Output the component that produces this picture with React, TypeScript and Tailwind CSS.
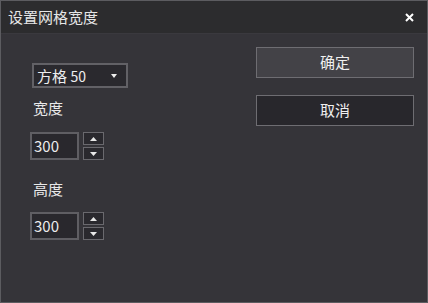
import React from 'react'

const font = { fontFamily: '"Noto Sans CJK SC", "Noto Sans", sans-serif' }

function Spin() {
  return (
    <div className="ml-[4px] flex h-[28px] w-[21px] flex-col justify-between">
      <div className="flex h-[13px] items-center justify-center border border-[#6a696e] bg-[#2a292e]">
        <svg width="7" height="4" viewBox="0 0 7 4"><path d="M0 4L3.5 0L7 4Z" fill="#e8e8e8" /></svg>
      </div>
      <div className="flex h-[13px] items-center justify-center border border-[#6a696e] bg-[#2a292e]">
        <svg width="7" height="4" viewBox="0 0 7 4"><path d="M0 0L3.5 4L7 0Z" fill="#e8e8e8" /></svg>
      </div>
    </div>
  )
}

function NumberField({ value }: { value: string }) {
  return (
    <div className="flex items-center">
      <div className="flex h-[28px] w-[49px] items-center border-2 border-[#5f5e63] bg-[#29282d] pl-[2px] text-[15px] text-[#ececec]">
        {value}
      </div>
      <Spin />
    </div>
  )
}

export default function App() {
  return (
    <div className="flex h-[303px] w-[428px] flex-col border border-[#5c5c60] bg-[#353439]" style={font}>
      <div className="flex h-[33px] items-center justify-between border-b border-[#3a393e] bg-[#2c2c2e] pl-[7px] pr-[13px]">
        <span className="text-[15px] text-[#e6e6e6]">设置网格宽度</span>
        <svg width="9" height="9" viewBox="0 0 9 9">
          <path d="M1 1L8 8M8 1L1 8" stroke="#ffffff" strokeWidth="2" />
        </svg>
      </div>
      <div className="flex flex-1 justify-between pl-[29px] pr-[13px]">
        <div className="flex flex-col">
          <div className="ml-[2px] mt-[29px] flex h-[25px] w-[96px] items-center justify-between border-2 border-[#626166] bg-[#2a292e] pl-[3px] pr-[9px] text-[#eeeeee]">
            <span className="text-[15px] leading-none">
              方格 <span className="text-[14px]">50</span>
            </span>
            <svg width="6" height="4" viewBox="0 0 6 4"><path d="M0 0L3 4L6 0Z" fill="#eeeeee" /></svg>
          </div>
          <span className="ml-[3px] mt-[10px] text-[15px] leading-[20px] text-[#e8e8e8]">宽度</span>
          <div className="mt-[14px]">
            <NumberField value="300" />
          </div>
          <span className="ml-[3px] mt-[19px] text-[15px] leading-[20px] text-[#e8e8e8]">高度</span>
          <div className="mt-[13px]">
            <NumberField value="300" />
          </div>
        </div>
        <div className="mt-[13px] flex w-[158px] flex-col gap-[17px]">
          <button className="h-[31px] border border-[#6e6d72] bg-[#434247] text-[15px] text-[#f0f0f0]">确定</button>
          <button className="h-[31px] border border-[#6e6d72] bg-[#28272c] text-[15px] text-[#f0f0f0]">取消</button>
        </div>
      </div>
    </div>
  )
}
